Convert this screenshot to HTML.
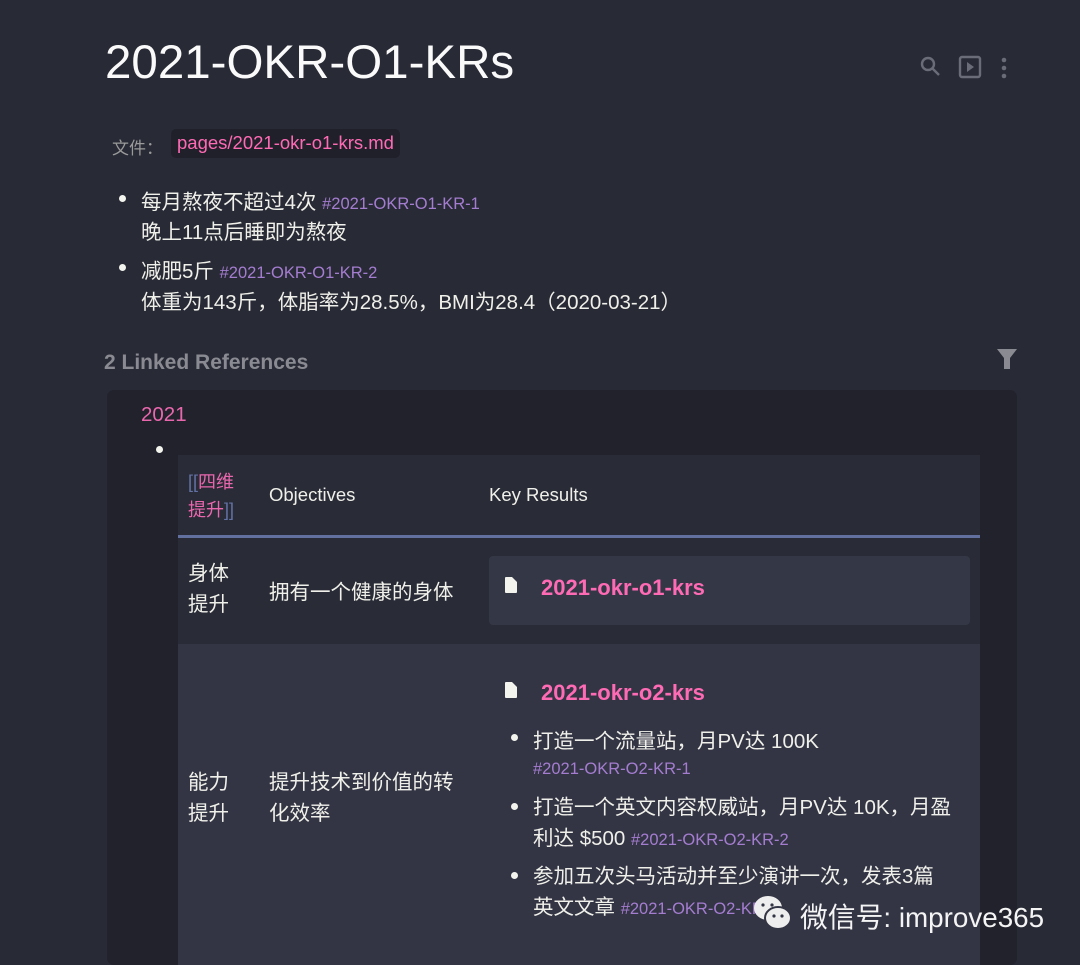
<!DOCTYPE html>
<html><head><meta charset="utf-8"><style>
*{margin:0;padding:0;box-sizing:border-box}
body{width:1080px;height:965px;overflow:hidden;background:#282a36;font-family:"Liberation Sans","Noto Sans CJK SC",sans-serif;color:#f0f0ea;position:relative}
.a{position:absolute;white-space:nowrap}
.tag{color:#a57dd0;font-size:16.5px}
.pk{color:#ff6ab5}
.dot{position:absolute;width:7px;height:7px;border-radius:50%;background:#f4f4ee}
</style></head><body>
<div class="a" style="left:105px;top:35px;font-size:47.5px;color:#fafafa">2021-OKR-O1-KRs</div>
<svg class="a" style="left:918px;top:54px" width="110" height="28" viewBox="0 0 110 28">
<g stroke="#6a6c78" stroke-width="2.4" fill="none"><circle cx="10" cy="10" r="6"/><path d="M14.5 14.5L21 21"/><rect x="42" y="3" width="20" height="20" rx="2"/></g>
<path d="M49 8l7 5-7 5z" fill="#6a6c78"/><circle cx="86" cy="6" r="2.3" fill="#6a6c78"/><circle cx="86" cy="14" r="2.3" fill="#6a6c78"/><circle cx="86" cy="22" r="2.3" fill="#6a6c78"/></svg>
<div class="a" style="left:112px;top:134px;font-size:17px;color:#9a9a9a">文件：</div>
<div class="a" style="left:171px;top:129px;height:29px;padding:3px 6px;background:#1f2029;border-radius:5px;font-size:18.5px;color:#ff6ab5">pages/2021-okr-o1-krs.md</div>
<div class="dot" style="left:119px;top:195px"></div>
<div class="a" style="left:141px;top:185px;font-size:20.5px">每月熬夜不超过4次 <span class="tag">#2021-OKR-O1-KR-1</span></div>
<div class="a" style="left:141px;top:215px;font-size:20.5px">晚上11点后睡即为熬夜</div>
<div class="dot" style="left:119px;top:264px"></div>
<div class="a" style="left:141px;top:254px;font-size:20.5px">减肥5斤 <span class="tag">#2021-OKR-O1-KR-2</span></div>
<div class="a" style="left:141px;top:285px;font-size:20.5px">体重为143斤，体脂率为28.5%，BMI为28.4（2020-03-21）</div>
<div class="a" style="left:104px;top:351px;font-size:21px;font-weight:bold;color:#8a8b92">2 Linked References</div>
<svg class="a" style="left:996px;top:348px" width="22" height="22" viewBox="0 0 22 22"><path d="M1 1h20l-7 9v11h-6v-11z" fill="#8a8b92"/></svg>
<div class="a" style="left:107px;top:390px;width:910px;height:575px;background:#21222c;border-radius:7px"></div>
<div class="a" style="left:141px;top:403px;font-size:20.5px;color:#e967ad">2021</div>
<div class="dot" style="left:156px;top:446px"></div>
<div class="a" style="left:178px;top:455px;width:802px;height:81px;background:#292b37"></div>
<div class="a" style="left:178px;top:535px;width:802px;height:3px;background:#6270a0"></div>
<div class="a" style="left:178px;top:538px;width:802px;height:106px;background:#292b37"></div>
<div class="a" style="left:178px;top:644px;width:802px;height:321px;background:#333545"></div>
<div class="a" style="left:188px;top:468px;font-size:18px;line-height:28px"><span style="color:#6272a4">[[</span><span style="color:#e967ad">四维</span><br><span style="color:#e967ad">提升</span><span style="color:#6272a4">]]</span></div>
<div class="a" style="left:269px;top:484px;font-size:18.5px">Objectives</div>
<div class="a" style="left:489px;top:484px;font-size:18.5px">Key Results</div>
<div class="a" style="left:188px;top:558px;font-size:20.5px;line-height:31px">身体<br>提升</div>
<div class="a" style="left:269px;top:575px;font-size:20.5px">拥有一个健康的身体</div>
<div class="a" style="left:489px;top:556px;width:481px;height:69px;background:#343746;border-radius:4px"></div>
<svg class="a" style="left:505px;top:577px" width="12" height="16"><path d="M0 1a1 1 0 0 1 1-1h6l5 5v10a1 1 0 0 1-1 1H1a1 1 0 0 1-1-1z" fill="#f4f4ee"/></svg>
<div class="a pk" style="left:541px;top:575px;font-size:22px;font-weight:bold">2021-okr-o1-krs</div>
<svg class="a" style="left:505px;top:682px" width="12" height="16"><path d="M0 1a1 1 0 0 1 1-1h6l5 5v10a1 1 0 0 1-1 1H1a1 1 0 0 1-1-1z" fill="#f4f4ee"/></svg>
<div class="a pk" style="left:541px;top:680px;font-size:22px;font-weight:bold">2021-okr-o2-krs</div>
<div class="a" style="left:188px;top:767px;font-size:20.5px;line-height:31px">能力<br>提升</div>
<div class="a" style="left:269px;top:767px;font-size:20.5px;line-height:31px">提升技术到价值的转<br>化效率</div>
<div class="dot" style="left:511px;top:734px"></div>
<div class="a" style="left:533px;top:724px;font-size:20.5px">打造一个流量站，月PV达 100K</div>
<div class="a tag" style="left:533px;top:760px">#2021-OKR-O2-KR-1</div>
<div class="dot" style="left:511px;top:803px"></div>
<div class="a" style="left:533px;top:792px;font-size:20.5px;line-height:31px">打造一个英文内容权威站，月PV达 10K，月盈<br>利达 $500 <span class="tag">#2021-OKR-O2-KR-2</span></div>
<div class="dot" style="left:511px;top:872px"></div>
<div class="a" style="left:533px;top:861px;font-size:20.5px;line-height:31px">参加五次头马活动并至少演讲一次，发表3篇<br>英文文章 <span class="tag">#2021-OKR-O2-KR-3</span></div>
<svg class="a" style="left:752px;top:892px" width="42" height="42" viewBox="0 0 42 42"><ellipse cx="16" cy="16" rx="14" ry="12" fill="#eee"/><ellipse cx="26" cy="26" rx="13" ry="11" fill="#eee" stroke="#333545" stroke-width="2"/><circle cx="11" cy="13" r="1.6" fill="#333545"/><circle cx="20" cy="13" r="1.6" fill="#333545"/><circle cx="22" cy="24" r="1.6" fill="#333545"/><circle cx="30" cy="24" r="1.6" fill="#333545"/></svg>
<div class="a" style="left:800px;top:896px;font-size:27.8px;color:#f4f4f4">微信号: improve365</div>
</body></html>
